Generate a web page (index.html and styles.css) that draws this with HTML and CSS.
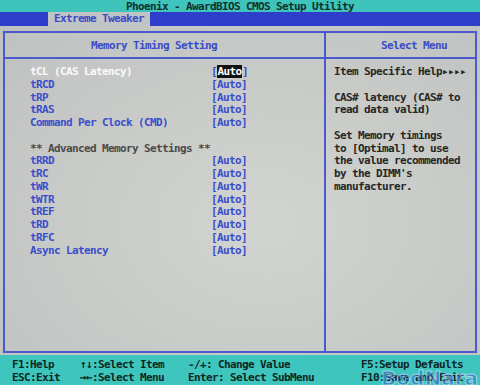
FILE: index.html
```html
<!DOCTYPE html>
<html lang="en">
<head>
  <meta charset="UTF-8" />
  <title>Phoenix - AwardBIOS CMOS Setup Utility</title>
  <link rel="stylesheet" href="styles.css">
</head>
<body>

  <div class="titlebar">Phoenix - AwardBIOS CMOS Setup Utility</div>
  <div class="tabbar"><div class="tab">Extreme Tweaker</div></div>

  <div class="main">
    <div class="frame">
      <div class="col left">
        <div class="head head-left">Memory Timing Setting</div>
        <div class="list">
          <div class="row current"><span class="label">tCL (CAS Latency)</span><span class="value">[<span class="sel">Auto</span>]</span></div>
          <div class="row"><span class="label">tRCD</span><span class="value">[Auto]</span></div>
          <div class="row"><span class="label">tRP</span><span class="value">[Auto]</span></div>
          <div class="row"><span class="label">tRAS</span><span class="value">[Auto]</span></div>
          <div class="row"><span class="label">Command Per Clock (CMD)</span><span class="value">[Auto]</span></div>
          <div class="row"></div>
          <div class="row section">** Advanced Memory Settings **</div>
          <div class="row"><span class="label">tRRD</span><span class="value">[Auto]</span></div>
          <div class="row"><span class="label">tRC</span><span class="value">[Auto]</span></div>
          <div class="row"><span class="label">tWR</span><span class="value">[Auto]</span></div>
          <div class="row"><span class="label">tWTR</span><span class="value">[Auto]</span></div>
          <div class="row"><span class="label">tREF</span><span class="value">[Auto]</span></div>
          <div class="row"><span class="label">tRD</span><span class="value">[Auto]</span></div>
          <div class="row"><span class="label">tRFC</span><span class="value">[Auto]</span></div>
          <div class="row"><span class="label">Async Latency</span><span class="value">[Auto]</span></div>
        </div>
      </div>

      <div class="col right">
        <div class="head head-right">Select Menu</div>
        <div class="help">
          <div class="line">Item Specific Help<span class="tri">▸▸▸▸</span></div>
          <div class="line"></div>
          <div class="line">CAS# latency (CAS# to</div>
          <div class="line">read data valid)</div>
          <div class="line"></div>
          <div class="line">Set Memory timings</div>
          <div class="line">to [Optimal] to use</div>
          <div class="line">the value recommended</div>
          <div class="line">by the DIMM's</div>
          <div class="line">manufacturer.</div>
        </div>
      </div>
    </div>
  </div>

  <div class="footer">
    <span>F1:Help</span><span>↑↓:Select Item</span><span>-/+: Change Value</span><span>F5:Setup Defaults</span>
    <span>ESC:Exit</span><span>→←:Select Menu</span><span>Enter: Select SubMenu</span><span>F10:Save and Exit</span>
  </div>

  <div class="mark">BodNara</div>

</body>
</html>
```

FILE: styles.css
```css
html, body { margin: 0; padding: 0; }
body {
  width: 480px; height: 385px; overflow: hidden; position: relative;
  font-family: "DejaVu Sans Mono", "Liberation Mono", monospace;
  font-size: 11px; letter-spacing: -0.62px; font-weight: bold;
  background: #c6c8c6;
}

.titlebar {
  height: 12px; line-height: 13px; text-align: center;
  background: #3fc4bc; color: #10302e;
}
.tabbar { height: 14px; background: #2e3ecb; }
.tab {
  margin-left: 48px; width: 102px; height: 14px; line-height: 14px;
  background: #c0c4c6; color: #3a4cc4; text-align: center;
}

.main {
  height: 329px; padding: 5px 3px 0 3px; box-sizing: border-box;
  background: radial-gradient(ellipse at 55% 60%, #d2d4d2 0%, #c8cac8 55%, #bfc1c0 100%);
}
.frame {
  height: 322px; border: 2px solid #4a5acc; box-sizing: border-box;
  display: grid; grid-template-columns: 321px 1fr;
}
.col.left { border-right: 2px solid #4a5acc; }

.head {
  height: 24px; line-height: 26px; border-bottom: 2px solid #4a5acc;
  color: #3a4cc8;
}
.head-left { padding-left: 86px; }
.head-right { padding-left: 55px; }

.list { padding-top: 7px; }
.row { height: 12.75px; line-height: 12.75px; padding-left: 25px; display: flex; color: #3b4ecc; }
.row .label { width: 181px; }
.row.current { color: #fafafa; }
.row.current .value { color: #3b4ecc; }
.sel { background: #111; color: #fff; padding: 0 0.5px; }
.row.section { color: #4a4a4a; }

.help { padding: 7px 0 0 8px; color: #262626; }
.help .line { height: 12.75px; line-height: 12.75px; }
.tri { letter-spacing: -0.6px; }

.footer {
  height: 30px; box-sizing: border-box; padding: 4px 0 0 12px;
  background: #3ec6be; color: #0e2624;
  display: grid; grid-template-columns: 68px 108px 173px auto;
  line-height: 12.5px;
}

.mark {
  position: absolute; right: 2px; bottom: -5px;
  font-family: "DejaVu Sans", sans-serif; font-weight: bold;
  font-size: 20px; letter-spacing: 0;
  color: rgba(40, 70, 200, 0.45);
  -webkit-text-stroke: 1px rgba(255, 255, 255, 0.5);
}
```
